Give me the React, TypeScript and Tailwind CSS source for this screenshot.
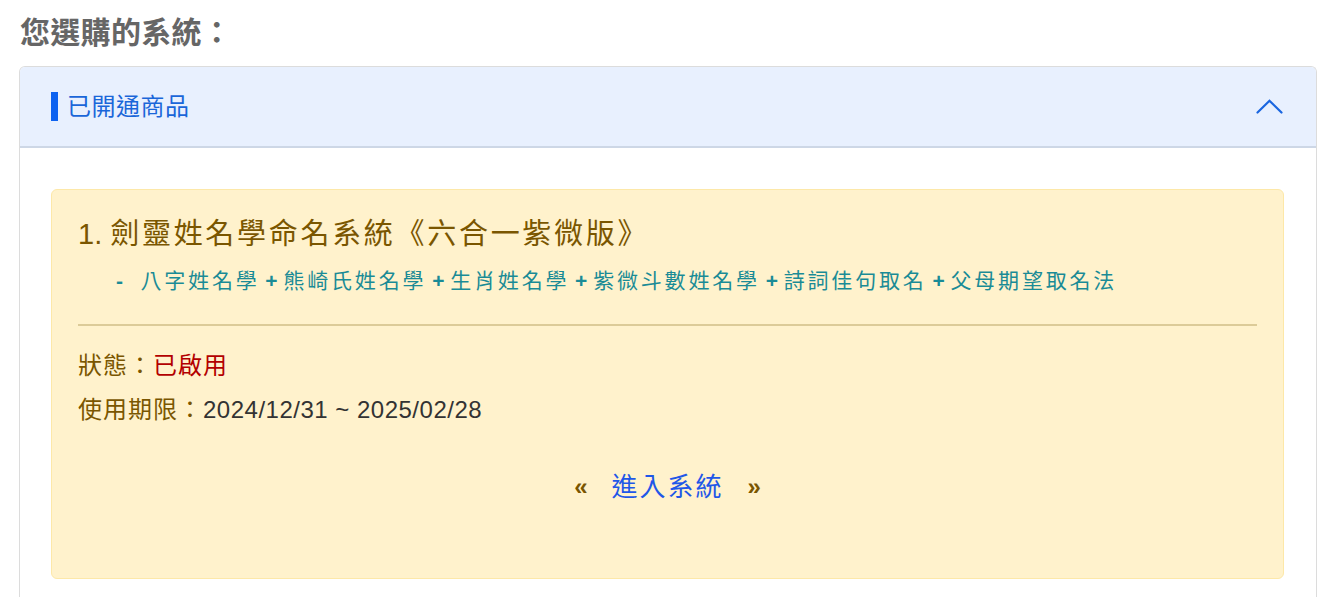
import React from "react";

const FONT = "font-['Liberation_Sans','Noto_Sans_CJK_TC',sans-serif]";

function ChevronUp() {
  return (
    <svg width="27" height="15" viewBox="0 0 27 15" fill="none">
      <path d="M1.5 13.5 L13.5 1.8 L25.5 13.5" stroke="#1a66e0" strokeWidth="2.2" strokeLinecap="round" strokeLinejoin="miter" />
    </svg>
  );
}

export default function App() {
  const items = [
    "八字姓名學",
    "熊崎氏姓名學",
    "生肖姓名學",
    "紫微斗數姓名學",
    "詩詞佳句取名",
    "父母期望取名法",
  ];
  return (
    <div className={`${FONT} bg-white w-[1341px] h-[616px] overflow-hidden`}>
      <div className="pt-[13px] pl-[20px] text-[30px] leading-[40px] font-bold text-[#666666] tracking-[0.3px]">
        您選購的系統：
      </div>
      <div className="mt-[13px] ml-[19px] mr-[24px] border border-b-0 border-[#dcdcdc] rounded-t-[6px]">
        <div className="h-[81px] bg-[#e8f0fe] border-b-2 border-[#cdd7e6] rounded-t-[5px] flex items-center justify-between pl-[31px] pr-[33px]">
          <div className="flex items-center">
            <div className="w-[7px] h-[29px] bg-[#0d62f0]" />
            <div className="ml-[9px] text-[24px] leading-[32px] text-[#1a66d9] tracking-[0.5px]">已開通商品</div>
          </div>
          <ChevronUp />
        </div>
        <div className="pt-[41px] pl-[31px] pr-[32px] pb-[18px]">
          <div className="bg-[#fff2cc] border border-[#fde8a8] rounded-[6px] pt-[26px] pl-[26px] pr-[26px] pb-[71px]">
            <div className="text-[29px] leading-[36px] text-[#7a5600] tracking-[2.7px]">
              <span className="tracking-[0px]">1. </span>劍靈姓名學命名系統《六合一紫微版》
            </div>
            <div className="mt-[13px] pl-[38px] text-[21px] leading-[32px] text-[#1a8b96] tracking-[2.8px] whitespace-nowrap">
              <span className="font-bold tracking-[0px]">-</span>
              <span className="tracking-[0px]">&nbsp;&nbsp;&nbsp;</span>
              {items.map((t, i) => (
                <React.Fragment key={i}>
                  {i > 0 && (
                    <span className="tracking-[0px]">
                      {" "}
                      <span className="font-bold">+</span>{" "}
                    </span>
                  )}
                  {t}
                </React.Fragment>
              ))}
            </div>
            <div className="mt-[27px] h-[2px] bg-[#dccb98]" />
            <div className="mt-[18px] text-[24px] leading-[44px] text-[#7a5600] tracking-[1px]">
              狀態：<span className="text-[#b30000]">已啟用</span>
            </div>
            <div className="text-[24px] leading-[44px] text-[#7a5600] tracking-[1px]">
              使用期限：<span className="text-[#333333] text-[24px] tracking-[0.5px]">2024/12/31 ~ 2025/02/28</span>
            </div>
            <div className="mt-[35px] flex items-center justify-center text-[26px] leading-[40px]">
              <span className="text-[#7a5600] font-bold text-[24px]">«</span>
              <span className="ml-[24px] mr-[24px] text-[#1f57e8] tracking-[2px]">進入系統</span>
              <span className="text-[#7a5600] font-bold text-[24px]">»</span>
            </div>
          </div>
        </div>
      </div>
    </div>
  );
}
